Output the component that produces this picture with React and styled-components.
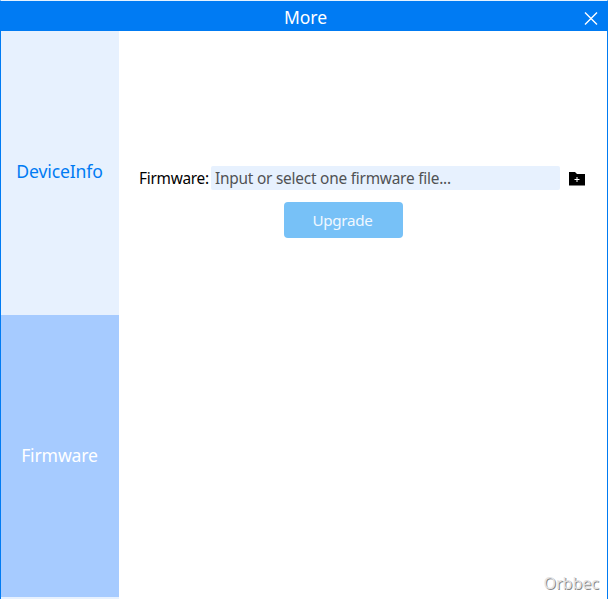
import React from "react";
import styled, { createGlobalStyle } from "styled-components";

const Global = createGlobalStyle`
  * { box-sizing: border-box; }
  body { margin: 0; font-family: "Noto Sans", sans-serif; }
`;
const Window = styled.div`
  width: 608px; height: 599px; background: #fff;
  display: flex; flex-direction: column; overflow: hidden;
  border: 1px solid #007bf3; border-top-color: #e4f2ff; border-bottom: 0;
`;
const TitleBar = styled.header`
  height: 30px; flex: none; background: #007bf3; color: #fff;
  display: grid; grid-template-columns: 35px 1fr 32px; align-items: start;
`;
const Title = styled.h1`
  margin: 0; grid-column: 2; text-align: center;
  font-size: 17.5px; font-weight: 400; line-height: 32px;
`;
const CloseButton = styled.button`
  border: 0; background: none; padding: 5px 0 0 0; height: 30px;
  display: flex; align-items: center; justify-content: center; color: inherit;
`;
const Body = styled.div` flex: 1; display: flex; `;
const Sidebar = styled.nav`
  width: 118px; display: flex; flex-direction: column; background: #e7f1fe;
`;
const Tab = styled.button`
  height: ${(p) => p.$height}px; border: 0;
  padding: 0 1px ${(p) => (p.$active ? 3 : 5)}px 0;
  font: 400 17.6px "Noto Sans", sans-serif; letter-spacing: -0.15px;
  background: ${(p) => (p.$active ? "#a6cbff" : "#e7f1fe")};
  color: ${(p) => (p.$active ? "#fff" : "#007bf3")};
`;
const Panel = styled.main` flex: 1; display: flex; flex-direction: column; `;
const FileRow = styled.label`
  margin: 135px 0 0 20px; display: flex; align-items: center; font-size: 15.4px;
  letter-spacing: -0.27px; height: 24px; color: #000;
`;
const Label = styled.span` width: 72px; white-space: nowrap; padding-top: 1px; `;
const PathInput = styled.input`
  width: 349px; height: 24px; border: 0; border-radius: 2px; padding: 1px 4px 0; background: #e7f1fe;
  font: 15.4px "Noto Sans", sans-serif; letter-spacing: -0.22px; color: #505254;
  &::placeholder { color: #505254; opacity: 1; }
`;
const FolderIcon = styled.svg` margin-left: 9px; margin-top: 1px; `;
const Upgrade = styled.button`
  margin: 12px 0 0 165px; width: 119px; height: 36px; border: 0; border-radius: 4px;
  padding: 0 2px 0 0;
  background: #77c1f7; color: #f0f8ff; font: 15.2px "Noto Sans", sans-serif; letter-spacing: -0.3px;
`;
const Brand = styled.footer`
  margin-top: auto; align-self: flex-end; padding: 0 8px 4px 0;
  font-size: 16px; line-height: 24px; color: #e4e4e4; text-shadow: 1px 1px 0 #888;
`;

export default function App() {
  return (
    <>
      <Global />
      <Window>
        <TitleBar>
          <Title>More</Title>
          <CloseButton aria-label="Close">
            <svg width="14" height="14" viewBox="0 0 14 14" fill="none" stroke="currentColor" strokeWidth="1.4"><path d="M1 .5l12 12M13 .5L1 12.5" /></svg>
          </CloseButton>
        </TitleBar>
        <Body>
          <Sidebar>
            <Tab $height={284}>DeviceInfo</Tab>
            <Tab $height={282} $active>Firmware</Tab>
          </Sidebar>
          <Panel>
            <FileRow>
              <Label>Firmware:</Label>
              <PathInput placeholder="Input or select one firmware file..." />
              <FolderIcon width="16" height="14" viewBox="0 0 16 14"><path d="M0 0h6l2 2h8V13.5H0z" /><path d="M8 5v5M5.5 7.5h5" stroke="#fff" /></FolderIcon>
            </FileRow>
            <Upgrade>Upgrade</Upgrade>
            <Brand>Orbbec</Brand>
          </Panel>
        </Body>
      </Window>
    </>
  );
}
